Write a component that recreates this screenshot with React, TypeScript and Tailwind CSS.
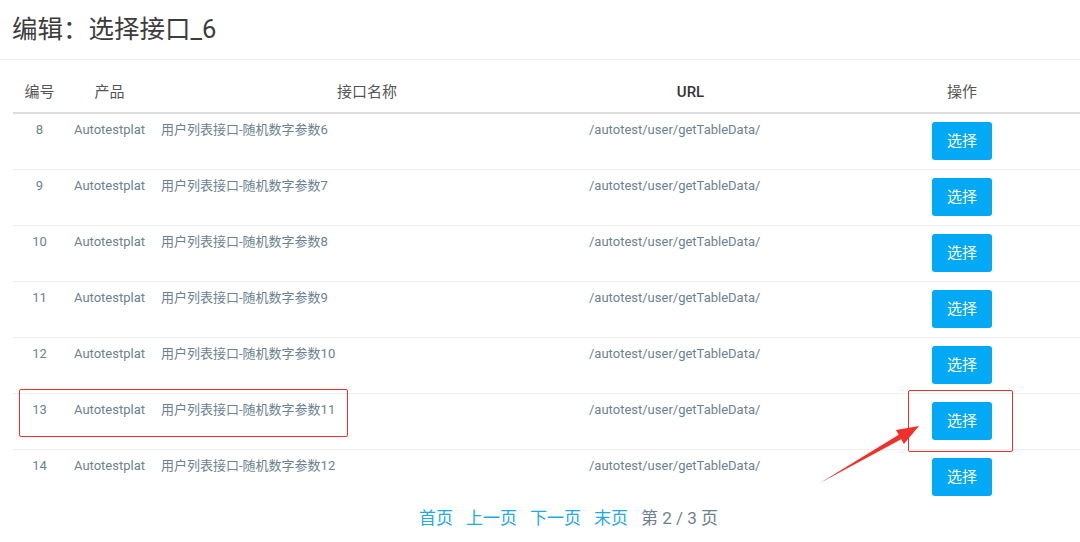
import React from "react";

const rows = [
  { id: 8, name: "用户列表接口-随机数字参数6" },
  { id: 9, name: "用户列表接口-随机数字参数7" },
  { id: 10, name: "用户列表接口-随机数字参数8" },
  { id: 11, name: "用户列表接口-随机数字参数9" },
  { id: 12, name: "用户列表接口-随机数字参数10" },
  { id: 13, name: "用户列表接口-随机数字参数11" },
  { id: 14, name: "用户列表接口-随机数字参数12" },
];

const cols = "grid grid-cols-[53px_87px_428px_219px_324px]";

export default function App() {
  return (
    <div className="relative w-[1080px] h-[542px] overflow-hidden bg-white font-['Roboto','Noto_Sans_CJK_SC',sans-serif]">
      <div className="h-[60px] border-b border-[#eeeeee] pl-3 pt-[12px]">
        <h1 className="text-[25.5px] leading-[34px] text-[#3c3c3c]">编辑：选择接口_6</h1>
      </div>

      <div className="ml-[13px] mt-[12px] w-[1111px]">
        {/* header */}
        <div className={`${cols} h-[42px] items-center border-b-2 border-[#dddddd] text-[15px] text-[#555]`}>
          <div className="text-center">编号</div>
          <div className="text-center">产品</div>
          <div className="text-center">接口名称</div>
          <div className="text-center font-medium text-[#333]">URL</div>
          <div className="text-center">操作</div>
        </div>

        {/* body */}
        {rows.map((r, i) => (
          <div
            key={r.id}
            className={`${cols} h-[56px] text-[13px] leading-[16px] text-[#6c8290] ${
              i < rows.length - 1 ? "border-b border-[#eeeeee]" : ""
            }`}
          >
            <div className="pt-2 text-center">{r.id}</div>
            <div className="pt-2 pl-2">Autotestplat</div>
            <div className="pt-2 pl-2">{r.name}</div>
            <div className="pt-2 pl-2">/autotest/user/getTableData/</div>
            <div className="flex justify-center pt-2">
              <button className="h-[38px] w-[60px] rounded-[3px] bg-[#03a9f4] text-[15px] text-white">
                选择
              </button>
            </div>
          </div>
        ))}

        {/* pagination */}
        <div className="flex justify-center gap-[13px] h-[26px] text-[17px] leading-[24px]">
          <span className="text-[#1eaae7]">首页</span>
          <span className="text-[#1eaae7]">上一页</span>
          <span className="text-[#1eaae7]">下一页</span>
          <span className="text-[#1eaae7]">末页</span>
          <span className="text-[#6c8290]">第 2 / 3 页</span>
        </div>
      </div>

      {/* red annotations */}
      <div className="absolute left-[19px] top-[389px] w-[329px] h-[48px] border-[1.5px] border-[#f0302a] rounded-[2px]" />
      <div className="absolute left-[908px] top-[390px] w-[105px] h-[62px] border-[1.5px] border-[#f0302a] rounded-[2px]" />
      <svg className="absolute left-0 top-0" width="1080" height="542">
        <polygon
          points="820,483 901.2,439.2 903.9,443.9 919,426 895.9,430.1 898.7,434.8"
          fill="#f0302a"
        />
      </svg>
    </div>
  );
}
